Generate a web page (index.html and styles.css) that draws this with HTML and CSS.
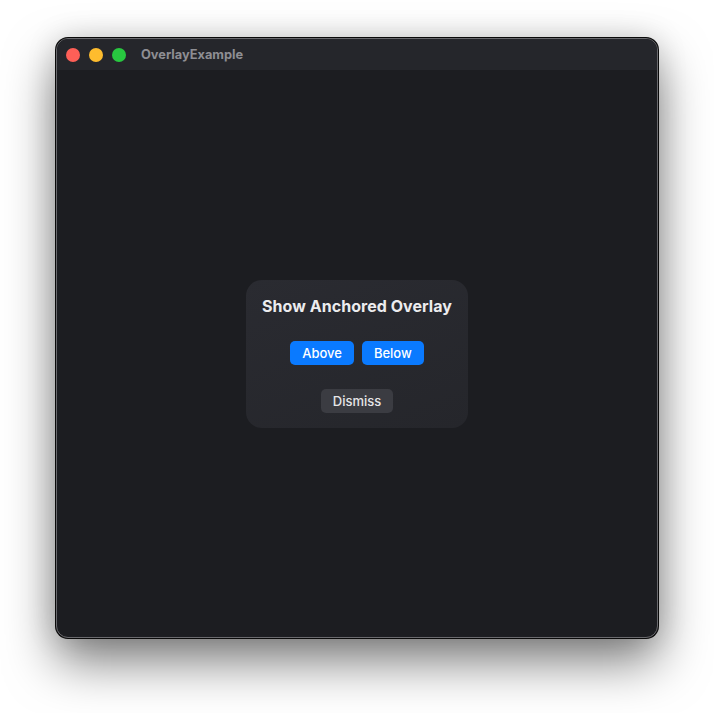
FILE: index.html
```html
<!DOCTYPE html>
<html>
<head>
<meta charset="utf-8">
<link rel="stylesheet" href="styles.css">
</head>
<body>
<div class="window">
  <div class="titlebar">
    <div class="lights">
      <span class="light red"></span>
      <span class="light yellow"></span>
      <span class="light green"></span>
    </div>
    <div class="title">OverlayExample</div>
  </div>
  <div class="content">
    <div class="card">
      <div class="card-title">Show Anchored Overlay</div>
      <div class="row">
        <button class="btn primary">Above</button>
        <button class="btn primary">Below</button>
      </div>
      <button class="btn secondary">Dismiss</button>
    </div>
  </div>
</div>
</body>
</html>
```

FILE: styles.css
```css
html, body {
  margin: 0;
  background: #ffffff;
}
body {
  box-sizing: border-box;
  min-height: 713px;
  padding: 38px 0 0 56px;
  font-family: Inter, "Liberation Sans", sans-serif;
}
.window {
  width: 602px;
  height: 600px;
  box-sizing: border-box;
  border-radius: 12px;
  border: 1px solid #6a6a6e;
  background: #1c1d21;
  box-shadow: 0 0 0 1px #0a0a0a, 0 24px 50px rgba(0, 0, 0, 0.5), 0 0 30px rgba(0,0,0,0.15);
  overflow: hidden;
  display: flex;
  flex-direction: column;
}
.titlebar {
  height: 31px;
  background: #25262b;
  display: flex;
  align-items: center;
  padding-left: 9px;
  flex-shrink: 0;
}
.lights {
  display: flex;
  gap: 9px;
}
.light {
  width: 14px;
  height: 14px;
  border-radius: 50%;
  display: block;
}
.red { background: #fe5f57; }
.yellow { background: #febc2e; }
.green { background: #28c840; }
.title {
  margin-left: 15px;
  color: #8e8e93;
  font-size: 12.8px;
  font-weight: 700;
}
.content {
  flex: 1;
  display: flex;
  align-items: center;
  justify-content: center;
}
.card {
  width: 222px;
  box-sizing: border-box;
  padding: 16px 0 15px;
  border-radius: 16px;
  background: linear-gradient(160deg, #2a2b31, #25262b);
  display: flex;
  flex-direction: column;
  align-items: center;
}
.card-title {
  color: #ececee;
  font-size: 16px;
  font-weight: 700;
  line-height: 20px;
  letter-spacing: 0.05px;
}
.row {
  display: flex;
  gap: 8px;
  margin-top: 25px;
}
.btn {
  font-family: inherit;
  font-size: 13px;
  font-weight: 500;
  height: 24px;
  border: none;
  border-radius: 5px;
  padding: 0 12px;
  line-height: 24px;
}
.primary {
  background: #0a7aff;
  color: #ffffff;
}
.secondary {
  margin-top: 24px;
  background: #3b3c42;
  color: #e6e6e8;
}
```
